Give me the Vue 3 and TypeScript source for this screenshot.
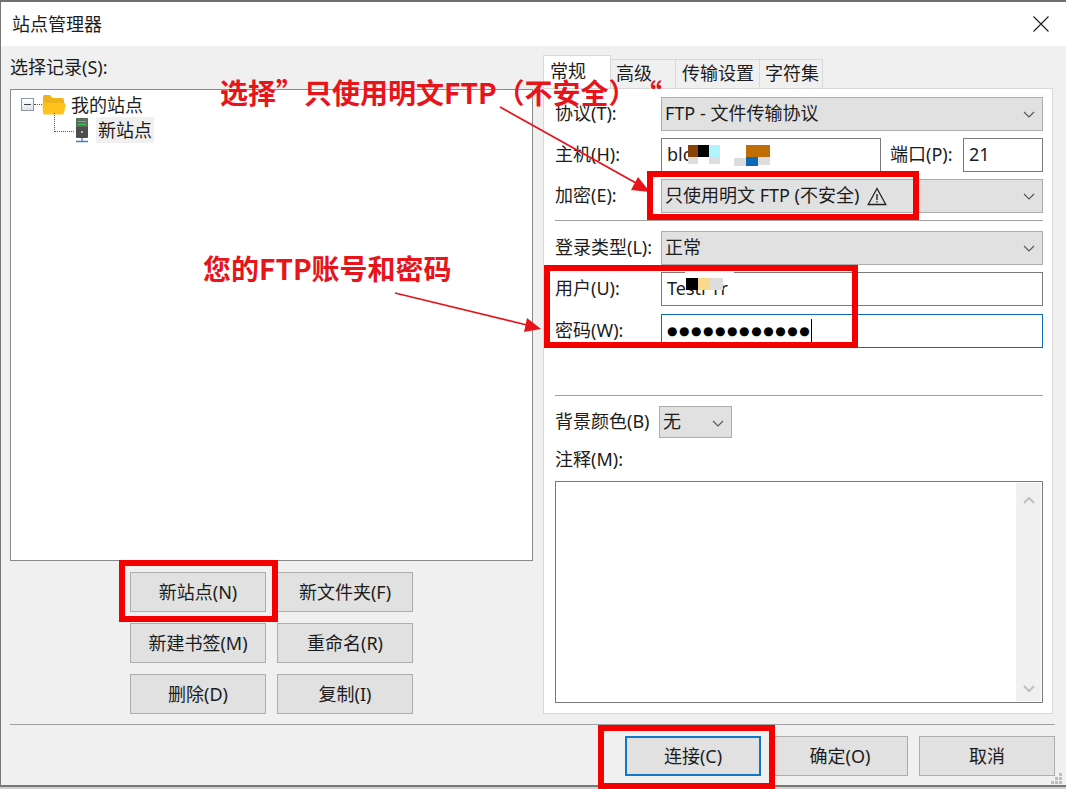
<script setup lang="ts">
const treeButtons: string[] = ['新站点(N)', '新文件夹(F)', '新建书签(M)', '重命名(R)', '删除(D)', '复制(I)']
const tabs: string[] = ['常规', '高级', '传输设置', '字符集']
const hostMasks: string[] = ['hb', 'hk', 'hc', 'ho1', 'ho2', 'hblue', 'hg1', 'hg2', 'hg3', 'hg4']
const userMasks: string[] = ['uw', 'uk', 'ut', 'ug']
</script>

<template>
  <div class="page">
    <div class="window">
      <header class="titlebar">
        <span class="title-text">站点管理器</span>
        <svg class="close" width="16" height="16" viewBox="0 0 16 16"><path d="M.5.5l15 15M15.500.5l-15 15" stroke="#222" stroke-width="1.200" fill="none" /></svg>
      </header>

      <main class="main">
        <section class="left">
          <div class="left-label">选择记录(S):</div>
          <div class="tree">
            <div class="tree-row">
              <span class="toggle"><i></i></span>
              <span class="dots"></span>
              <svg class="folder" width="24" height="21" viewBox="0 0 24 21">
                <path d="M1 2.500Q1 1 2.500 1H8l2.500 3H20q2 0 2 2v3H1z" fill="#f0b21a" />
                <path d="M.5 9H22q2 0 1.700 2L22 19q-.3 1.500-2 1.500H2.500Q1 20.500 1 19z" fill="#fdc21e" />
              </svg>
              <span class="tree-text">我的站点</span>
            </div>
            <div class="tree-row child">
              <span class="elbow"></span>
              <svg class="server" width="14" height="26" viewBox="0 0 14 26">
                <rect x="1" y="1" width="12" height="20" rx="1" fill="#4d4d4d" />
                <rect x="1" y="1" width="12" height="9" fill="#5f6f5f" />
                <path d="M3 4.500h8M3 7.500h8" stroke="#3ecf4f" stroke-width="1.200" />
                <circle cx="7" cy="15" r="1" fill="#ddd" />
                <path d="M7 21v3M1 24.500h12" stroke="#4a7fb5" stroke-width="1.300" />
              </svg>
              <span class="tree-text selected">新站点</span>
            </div>
          </div>
          <div class="tree-buttons">
            <button v-for="b in treeButtons" :key="b" class="btn">{{ b }}</button>
          </div>
        </section>

        <section class="right">
          <nav class="tabs">
            <span v-for="(t, i) in tabs" :key="t" class="tab" :class="{ active: i === 0 }">{{ t }}</span>
          </nav>
          <div class="panel">
            <div class="row">
              <label>协议(T):</label>
              <div class="combo">FTP - 文件传输协议<svg class="chev" width="12" height="7" viewBox="0 0 12 7"><path d="M1 1l5 5 5-5" /></svg></div>
            </div>
            <div class="row">
              <label>主机(H):</label>
              <div class="input host">blc<i v-for="m in hostMasks" :key="m" class="mask" :class="m"></i></div>
              <label class="port-label">端口(P):</label>
              <div class="input port">21</div>
            </div>
            <div class="row">
              <label>加密(E):</label>
              <div class="combo"><span>只使用明文 FTP (不安全)</span><svg class="warn" width="20" height="19" viewBox="0 0 20 19"><path d="M10 1.500L18.800 17.500H1.200z" fill="none" stroke="#222" stroke-width="1.300" /><path d="M10 7v6M10 14.200v1.400" stroke="#222" stroke-width="1.400" /></svg><svg class="chev" width="12" height="7" viewBox="0 0 12 7"><path d="M1 1l5 5 5-5" /></svg></div>
            </div>
            <hr class="sep first" />
            <div class="row">
              <label>登录类型(L):</label>
              <div class="combo">正常<svg class="chev" width="12" height="7" viewBox="0 0 12 7"><path d="M1 1l5 5 5-5" /></svg></div>
            </div>
            <div class="row">
              <label>用户(U):</label>
              <div class="input user">Testr rr<i v-for="m in userMasks" :key="m" class="mask" :class="m"></i></div>
            </div>
            <div class="row pw-row">
              <label>密码(W):</label>
              <div class="input focused"><span class="dots-text">●●●●●●●●●●●●</span><span class="caret"></span></div>
            </div>
            <hr class="sep second" />
            <div class="row bg-row">
              <label>背景颜色(B)</label>
              <div class="combo small">无<svg class="chev" width="12" height="7" viewBox="0 0 12 7"><path d="M1 1l5 5 5-5" /></svg></div>
            </div>
            <div class="note-label">注释(M):</div>
            <div class="textarea">
              <div class="scroll">
                <svg width="12" height="8" viewBox="0 0 12 8"><path d="M1 7l5-5 5 5" /></svg>
                <svg width="12" height="8" viewBox="0 0 12 8"><path d="M1 1l5 5 5-5" /></svg>
              </div>
            </div>
          </div>
        </section>
      </main>

      <footer class="footer">
        <button class="btn primary">连接(C)</button>
        <button class="btn">确定(O)</button>
        <button class="btn">取消</button>
      </footer>
      <svg class="grip" width="12" height="12" viewBox="0 0 12 12" fill="#bdbdbd">
        <rect x="9" y="0" width="3" height="3" /><rect x="5" y="4" width="3" height="3" /><rect x="9" y="4" width="3" height="3" />
        <rect x="1" y="8" width="3" height="3" /><rect x="5" y="8" width="3" height="3" /><rect x="9" y="8" width="3" height="3" />
      </svg>
    </div>

    <div class="note note-a">选择”只使用明文FTP（不安全）</div>
    <div class="note note-quote">“</div>
    <div class="note note-b">您的FTP账号和密码</div>
    <svg class="arrows" width="1066" height="789" viewBox="0 0 1066 789">
      <path d="M500 107L636 183" stroke="#e8141c" stroke-width="1.800" fill="none" />
      <path d="M650 192L631 190L638 177z" fill="#e8141c" />
      <path d="M395 293L527 325" stroke="#e8141c" stroke-width="1.800" fill="none" />
      <path d="M541 329L524 332L527 318z" fill="#e8141c" />
    </svg>
    <div class="redbox r-enc"></div>
    <div class="redbox r-user"></div>
    <div class="redbox r-new"></div>
    <div class="redbox r-conn"></div>
  </div>
</template>

<style>
html, body { background: #cfcfcf; overflow: hidden; }
</style>

<style scoped>
.page {
  position: relative;
  width: 1066px;
  height: 789px;
  overflow: hidden;
  font-family: "Noto Sans", "Noto Sans CJK SC", sans-serif;
  font-size: 18px;
  color: #1c1c1c;
}
.window {
  position: relative;
  box-sizing: border-box;
  width: 1066px;
  height: 787px;
  background: #f0f0f0;
  border-top: 2px solid #6f6f6f;
  border-left: 1px solid #777;
  border-bottom: 2px solid #777;
  display: flex;
  flex-direction: column;
}
.titlebar {
  height: 44px;
  flex: none;
  background: #fff;
  display: flex;
  align-items: center;
  justify-content: space-between;
  padding: 0 17px 0 11px;
}
.title-text { padding-bottom: 3px; }
.main {
  flex: none;
  display: grid;
  grid-template-columns: 523px 510px;
  column-gap: 10px;
  padding: 9px 0 0 9px;
  height: 668px;
  box-sizing: border-box;
}
.left { display: flex; flex-direction: column; min-width: 0; }
.left-label { height: 24px; line-height: 24px; margin-top: 0; margin-bottom: 10px; }
.tree {
  flex: 1;
  box-sizing: border-box;
  background: #fff;
  border: 1px solid #8a8a8a;
  padding: 1px 0 0 10px;
}
.tree-row { display: flex; align-items: center; height: 26px; position: relative; }
.toggle {
  box-sizing: border-box;
  width: 13px;
  height: 13px;
  border: 1px solid #8f98a6;
  background: linear-gradient(#fff, #dfe3ea);
  display: flex;
  align-items: center;
  justify-content: center;
  flex: none;
}
.toggle i { display: block; width: 7px; height: 1px; background: #444; }
.dots { width: 8px; border-top: 1px dotted #555; flex: none; }
.folder { flex: none; }
.tree-row .tree-text { margin-left: 5px; padding-bottom: 1px; }
.child { padding-left: 33px; }
.elbow {
  box-sizing: border-box;
  width: 20px;
  height: 19px;
  margin-top: -16px;
  border-left: 1px dotted #555;
  border-bottom: 1px dotted #555;
  flex: none;
}
.server { flex: none; margin-left: 1px; }
.tree-row .selected { margin-left: 7px; background: #f0f0f0; padding: 0 2px; line-height: 26px; height: 26px; }
.tree-buttons {
  margin-top: 11px;
  display: grid;
  grid-template-columns: 136px 136px;
  grid-auto-rows: 40px;
  gap: 11px;
  justify-content: start;
  padding-left: 120px;
}
.btn {
  box-sizing: border-box;
  height: 40px;
  border: 1px solid #adadad;
  background: #e1e1e1;
  font: inherit;
  color: inherit;
  padding: 0 0 2px;
}
.tabs { display: flex; height: 33px; align-items: flex-end; }
.tab {
  box-sizing: border-box;
  height: 29px;
  padding: 0 6px;
  border: 1px solid #d9d9d9;
  border-bottom: none;
  border-left: none;
  line-height: 26px;
  white-space: nowrap;
  background: #f0f0f0;
}
.tab.active {
  height: 33px;
  width: 68px;
  background: #fff;
  border-left: 1px solid #d9d9d9;
  line-height: 31px;
}
.tab:nth-child(2) { width: 65px; padding-left: 5px; }
.tab:nth-child(3) { width: 84px; }
.tab:nth-child(4) { width: 63px; padding-left: 5px; }
.panel {
  box-sizing: border-box;
  height: 626px;
  background: #fff;
  border: 1px solid #d9d9d9;
  padding: 8px 9px 0 11px;
  display: flex;
  flex-direction: column;
}
.row { display: flex; align-items: center; height: 34px; margin-bottom: 7px; }
.row label { width: 106px; flex: none; white-space: nowrap; padding-bottom: 5px; }
.combo {
  flex: 1;
  box-sizing: border-box;
  height: 34px;
  background: #e1e1e1;
  border: 1px solid #adadad;
  display: flex;
  align-items: center;
  padding: 0 0 4px 3px;
  position: relative;
}
.chev { position: absolute; right: 7px; top: 13px; }
.chev path { fill: none; stroke: #555; stroke-width: 1.100; }
.warn { margin: 4px 0 0 8px; }
.input {
  flex: 1;
  box-sizing: border-box;
  height: 34px;
  background: #fff;
  border: 1px solid #7a7a7a;
  display: flex;
  align-items: center;
  padding: 0 0 3px 5px;
  position: relative;
}
.input.host { flex: none; width: 220px; }
.row label.port-label { width: 73px; margin-left: 9px; }
.input.port { flex: none; width: 80px; }
.input.focused { border-color: #0f6cb5; padding-bottom: 0; }
.dots-text {
  font-family: "DejaVu Sans", sans-serif;
  font-size: 12px;
  letter-spacing: 1.550px;
  color: #000;
}
.caret { width: 1px; height: 24px; background: #000; margin-left: 0; }
.mask { position: absolute; display: block; }
.hb { left: 26px; top: 6px; width: 11px; height: 12px; background: #8b4208; }
.hk { left: 36px; top: 6px; width: 12px; height: 12px; background: #000; }
.hc { left: 47px; top: 6px; width: 11px; height: 12px; background: #aef6fb; }
.ho1 { left: 84px; top: 6px; width: 12px; height: 12px; background: #bf6e05; }
.ho2 { left: 96px; top: 6px; width: 12px; height: 12px; background: #bf6e05; }
.hblue { left: 84px; top: 18px; width: 12px; height: 9px; background: #0a6ab8; }
.hg1 { left: 26px; top: 18px; width: 10px; height: 7px; background: #ddd; }
.hg2 { left: 47px; top: 18px; width: 11px; height: 7px; background: #ddd; }
.hg3 { left: 72px; top: 19px; width: 12px; height: 8px; background: #ddd; }
.hg4 { left: 96px; top: 18px; width: 12px; height: 8px; background: #ddd; }
.uw { left: 23px; top: -1px; width: 49px; height: 6px; background: #fff; }
.uk { left: 24px; top: 5px; width: 12px; height: 12px; background: #000; }
.ut { left: 36px; top: 5px; width: 12px; height: 12px; background: #fbd98c; }
.ug { left: 48px; top: 5px; width: 13px; height: 12px; background: #ddd; }
.pw-row { margin-top: 1px; margin-bottom: 0; }
.sep { width: 100%; margin: 0; border: none; border-top: 1px solid #a0a0a0; flex: none; }
.sep.first { margin: 0 0 10px; }
.sep.second { margin: 47px 0 10px; }
.bg-row { height: 32px; margin-bottom: 0; }
.bg-row label { width: 104px; }
.combo.small { flex: none; width: 73px; height: 32px; }
.note-label { margin-top: 9px; height: 24px; line-height: 24px; margin-bottom: 1px; }
.textarea {
  box-sizing: border-box;
  margin-top: 9px;
  height: 222px;
  background: #fff;
  border: 1px solid #7a7a7a;
  display: flex;
  justify-content: flex-end;
  padding: 1px;
}
.scroll {
  width: 25px;
  background: #f0f0f0;
  display: flex;
  flex-direction: column;
  justify-content: space-between;
  align-items: center;
  padding: 13px 0 8px;
  box-sizing: border-box;
}
.scroll path { fill: none; stroke: #c0c0c0; stroke-width: 2; }
.footer {
  margin: 10px 0 0 9px;
  width: 1045px;
  box-sizing: border-box;
  border-top: 1px solid #a0a0a0;
  padding-top: 11px;
  display: grid;
  grid-template-columns: 136px 136px 136px;
  gap: 11px;
  justify-content: end;
}
.btn.primary { border: 2px solid #0f78c8; }
.grip { position: absolute; right: 4px; bottom: 0; }
.note {
  position: absolute;
  color: #e8141c;
  font-family: "Noto Sans CJK SC", sans-serif;
  font-weight: 700;
  font-size: 28px;
  line-height: 34px;
  white-space: nowrap;
}
.note-a { left: 220px; top: 75px; }
.note-quote { left: 634px; top: 76px; }
.note-b { left: 203px; top: 251px; }
.arrows { position: absolute; left: 0; top: 0; }
.redbox { position: absolute; box-sizing: border-box; border: 6px solid #f50000; }
.r-enc { left: 647px; top: 171px; width: 272px; height: 49px; }
.r-user { left: 544px; top: 265px; width: 314px; height: 83px; }
.r-new { left: 119px; top: 560px; width: 159px; height: 62px; }
.r-conn { left: 598px; top: 725px; width: 177px; height: 64px; }
</style>
